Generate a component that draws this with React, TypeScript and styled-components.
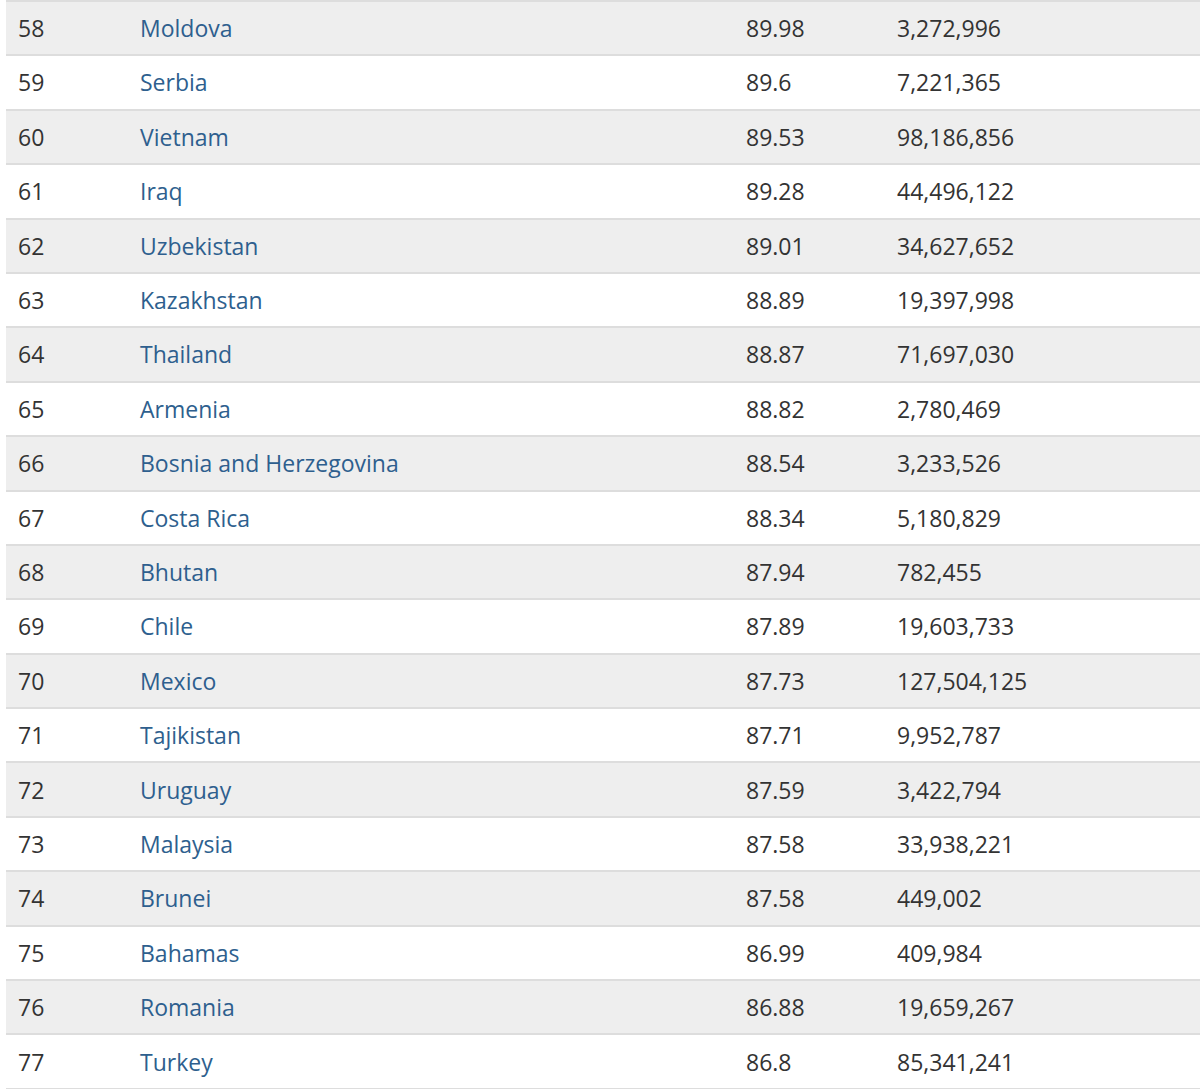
import React from 'react'
import styled, { createGlobalStyle } from 'styled-components'

const GlobalStyle = createGlobalStyle`
  html, body {
    margin: 0;
    padding: 0;
    background: #ffffff;
  }
  body {
    font-family: "Open Sans", "Noto Sans", sans-serif;
  }
`

const Page = styled.div`
  padding: 0 0 0 6px;
  overflow: hidden;
`

const Table = styled.table`
  width: 1200px;
  border-collapse: collapse;
  font-size: 23px;
  color: #333333;
  border-bottom: 2px solid #dddddd;
`

const Row = styled.tr<{ $striped: boolean }>`
  background: ${({ $striped }) => ($striped ? '#eeeeee' : '#ffffff')};
`

const Cell = styled.td<{ $width?: number }>`
  width: ${({ $width }) => ($width ? `${$width}px` : 'auto')};
  height: 54.4px;
  padding: 0 0 0 12px;
  border-top: 2px solid #dddddd;
  vertical-align: middle;
  line-height: 1.4;
  box-sizing: border-box;
`

const CountryLink = styled.a`
  color: #2e5f8e;
  text-decoration: none;
`

const rows: [number, string, string, string][] = [
  [58, 'Moldova', '89.98', '3,272,996'],
  [59, 'Serbia', '89.6', '7,221,365'],
  [60, 'Vietnam', '89.53', '98,186,856'],
  [61, 'Iraq', '89.28', '44,496,122'],
  [62, 'Uzbekistan', '89.01', '34,627,652'],
  [63, 'Kazakhstan', '88.89', '19,397,998'],
  [64, 'Thailand', '88.87', '71,697,030'],
  [65, 'Armenia', '88.82', '2,780,469'],
  [66, 'Bosnia and Herzegovina', '88.54', '3,233,526'],
  [67, 'Costa Rica', '88.34', '5,180,829'],
  [68, 'Bhutan', '87.94', '782,455'],
  [69, 'Chile', '87.89', '19,603,733'],
  [70, 'Mexico', '87.73', '127,504,125'],
  [71, 'Tajikistan', '87.71', '9,952,787'],
  [72, 'Uruguay', '87.59', '3,422,794'],
  [73, 'Malaysia', '87.58', '33,938,221'],
  [74, 'Brunei', '87.58', '449,002'],
  [75, 'Bahamas', '86.99', '409,984'],
  [76, 'Romania', '86.88', '19,659,267'],
  [77, 'Turkey', '86.8', '85,341,241'],
]

export default function App() {
  return (
    <>
      <GlobalStyle />
      <Page>
        <Table>
          <tbody>
            {rows.map(([rank, country, value, population], i) => (
              <Row key={rank} $striped={i % 2 === 0}>
                <Cell $width={122}>{rank}</Cell>
                <Cell $width={606}>
                  <CountryLink href="#">{country}</CountryLink>
                </Cell>
                <Cell $width={151}>{value}</Cell>
                <Cell>{population}</Cell>
              </Row>
            ))}
          </tbody>
        </Table>
      </Page>
    </>
  )
}
